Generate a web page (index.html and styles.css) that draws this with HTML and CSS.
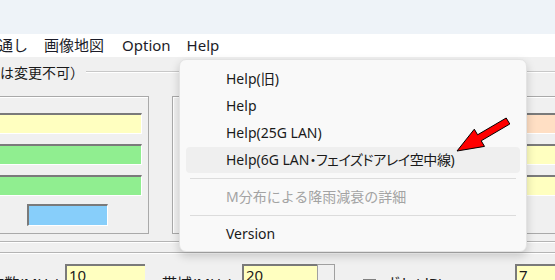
FILE: index.html
```html
<!DOCTYPE html>
<html lang="ja">
<head>
<meta charset="utf-8">
<link rel="stylesheet" href="styles.css">
</head>
<body>
<div class="window">
  <div class="titlebar"></div>
  <nav class="menubar">
    <span class="mi first">見通し</span>
    <span class="mi">画像地図</span>
    <span class="mi">Option</span>
    <span class="mi">Help</span>
  </nav>
  <main class="client">
    <section class="group">
      <div class="group-head"><span class="group-title">（値は変更不可）</span><span class="rule"></span></div>
      <div class="panels">
        <div class="panel left">
          <div class="field yellow"></div>
          <div class="field green"></div>
          <div class="field green"></div>
          <div class="swatch"></div>
        </div>
        <div class="panel right">
          <div class="field peach"></div>
          <div class="field yellow"></div>
          <div class="field yellow"></div>
        </div>
      </div>
    </section>
    <div class="divider"></div>
    <div class="row">
      <span class="lbl l1">周波数(MHz)</span>
      <span class="input i1">10</span>
      <span class="lbl l2">帯域(MHz)</span>
      <span class="input i2">20</span>
      <span class="spin"></span>
      <span class="check"></span>
      <span class="lbl l3">ボレ(dB)</span>
      <span class="input i3">7</span>
    </div>
  </main>
  <div class="popup">
    <div class="item">Help(旧)</div>
    <div class="item">Help</div>
    <div class="item">Help(25G LAN)</div>
    <div class="item hot">Help(6G LAN<span class="prop">・フェイズドアレイ空中線</span>)</div>
    <div class="sep"></div>
    <div class="item disabled">M分布による降雨減衰の詳細</div>
    <div class="sep"></div>
    <div class="item">Version</div>
  </div>
  <svg class="arrow" width="555" height="280" viewBox="0 0 555 280">
    <polygon points="457,151 474.3,129.2 477.6,134.8 506.2,118 509.8,124 481.2,140.8 484.5,146.4" fill="#ff0000" stroke="#000" stroke-width="1" stroke-linejoin="miter"/>
  </svg>
</div>
</body>
</html>
```

FILE: styles.css
```css
* { box-sizing: border-box; }
html, body { margin: 0; padding: 0; }
body {
  width: 555px;
  height: 280px;
  overflow: hidden;
  background: #f0f0f0;
  font-family: "Noto Sans", "Noto Sans CJK JP", sans-serif;
  color: #1a1a1a;
}
.window {
  position: relative;
  width: 555px;
  height: 280px;
  overflow: hidden;
}
.titlebar {
  height: 34px;
  background: #eef3f8;
}
.menubar {
  height: 23px;
  background: #ffffff;
  display: flex;
  align-items: center;
  font-size: 15px;
  line-height: 23px;
  white-space: nowrap;
}
.mi { padding: 0 8px; color: #1c1c28; }
.mi.first { margin-left: -25px; }
.mi:nth-child(3) { margin-left: 2px; }

.client { padding-top: 5px; }
.group-head {
  display: flex;
  align-items: center;
  height: 20px;
  margin-left: -28px;
  font-size: 14px;
  white-space: nowrap;
}
.rule {
  flex: 1;
  margin-left: 2px;
  border-top: 1px solid #c8c8c8;
  border-bottom: 1px solid #ffffff;
}
.panels {
  display: flex;
  gap: 23px;
  margin-top: 14px;
  height: 138px;
}
.panel {
  border: 1px solid #a9a9a9;
  box-shadow: inset 1px 1px 0 #ffffff;
  padding: 16px 6px 6px;
  display: flex;
  flex-direction: column;
  gap: 10px;
}
.panel.left {
  margin-left: -14px;
  width: 163px;
  flex: none;
}
.panel.right {
  flex: none;
  width: 420px;
  padding-left: 240px;
}
.field {
  height: 21px;
  border-top: 2px solid #7a7a7a;
  border-left: 2px solid #7a7a7a;
  border-right: 1px solid #ffffff;
  border-bottom: 1px solid #ffffff;
}
.yellow { background: #ffffc0; }
.green { background: #90ee90; }
.peach { background: #ffdfc4; }
.swatch {
  align-self: center;
  width: 81px;
  height: 22px;
  margin-top: -2px;
  background: #87cefa;
  border-top: 2px solid #7a7a7a;
  border-left: 2px solid #7a7a7a;
  border-right: 1px solid #ffffff;
  border-bottom: 1px solid #ffffff;
}
.group {
  border-bottom: 1px solid #b4b4b4;
  box-shadow: 0 1px 0 #ffffff;
  padding-bottom: 7px;
}
.divider {
  margin-top: 10px;
  border-top: 1px solid #b4b4b4;
  border-bottom: 1px solid #ffffff;
}
.row {
  display: flex;
  align-items: flex-start;
  margin-top: 10px;
  height: 30px;
  font-size: 15px;
  line-height: 20px;
  white-space: nowrap;
}
.row > * { flex: none; }
.lbl { padding-top: 9px; }
.l1 { width: 60px; text-align: right; direction: rtl; overflow: hidden; margin-right: 5px; }
.input {
  height: 22px;
  background: #ffffc0;
  border-top: 2px solid #7a7a7a;
  border-left: 2px solid #7a7a7a;
  padding-left: 2px;
  line-height: 18px;
}
.i1 { width: 80px; }
.l2 { margin-left: 17px; width: 80px; }
.i2 { width: 75px; }
.spin {
  width: 18px;
  height: 22px;
  background: #f0f0f0;
  border: 1px solid #a0a0a0;
}
.check {
  width: 13px;
  height: 13px;
  margin: 15px 0 0 28px;
  border: 1px solid #808080;
  background: #fff;
}
.l3 { margin-left: 9px; width: 130px; }
.i3 { width: 60px; }

.popup {
  position: absolute;
  left: 179px;
  top: 59px;
  width: 348px;
  height: 193px;
  background: #f9f9f9;
  border: 1px solid #e3e3e3;
  border-radius: 7px;
  box-shadow: 0 4px 10px rgba(0, 0, 0, 0.18);
  padding: 6px 6px 1px;
  font-size: 14px;
  white-space: nowrap;
}
.item {
  height: 26px;
  line-height: 26px;
  padding-left: 40px;
  margin-bottom: 1px;
  border-radius: 4px;
  color: #1a1a1a;
}
.item.hot { background: #efefef; }
.item.disabled { color: #a3a3a3; }
.prop { font-feature-settings: "palt" 1; letter-spacing: -0.4px; }
.sep {
  height: 1px;
  background: #dcdcdc;
  margin: 5px 4px 5px;
}
.arrow {
  position: absolute;
  left: 0;
  top: 0;
  pointer-events: none;
}
```
